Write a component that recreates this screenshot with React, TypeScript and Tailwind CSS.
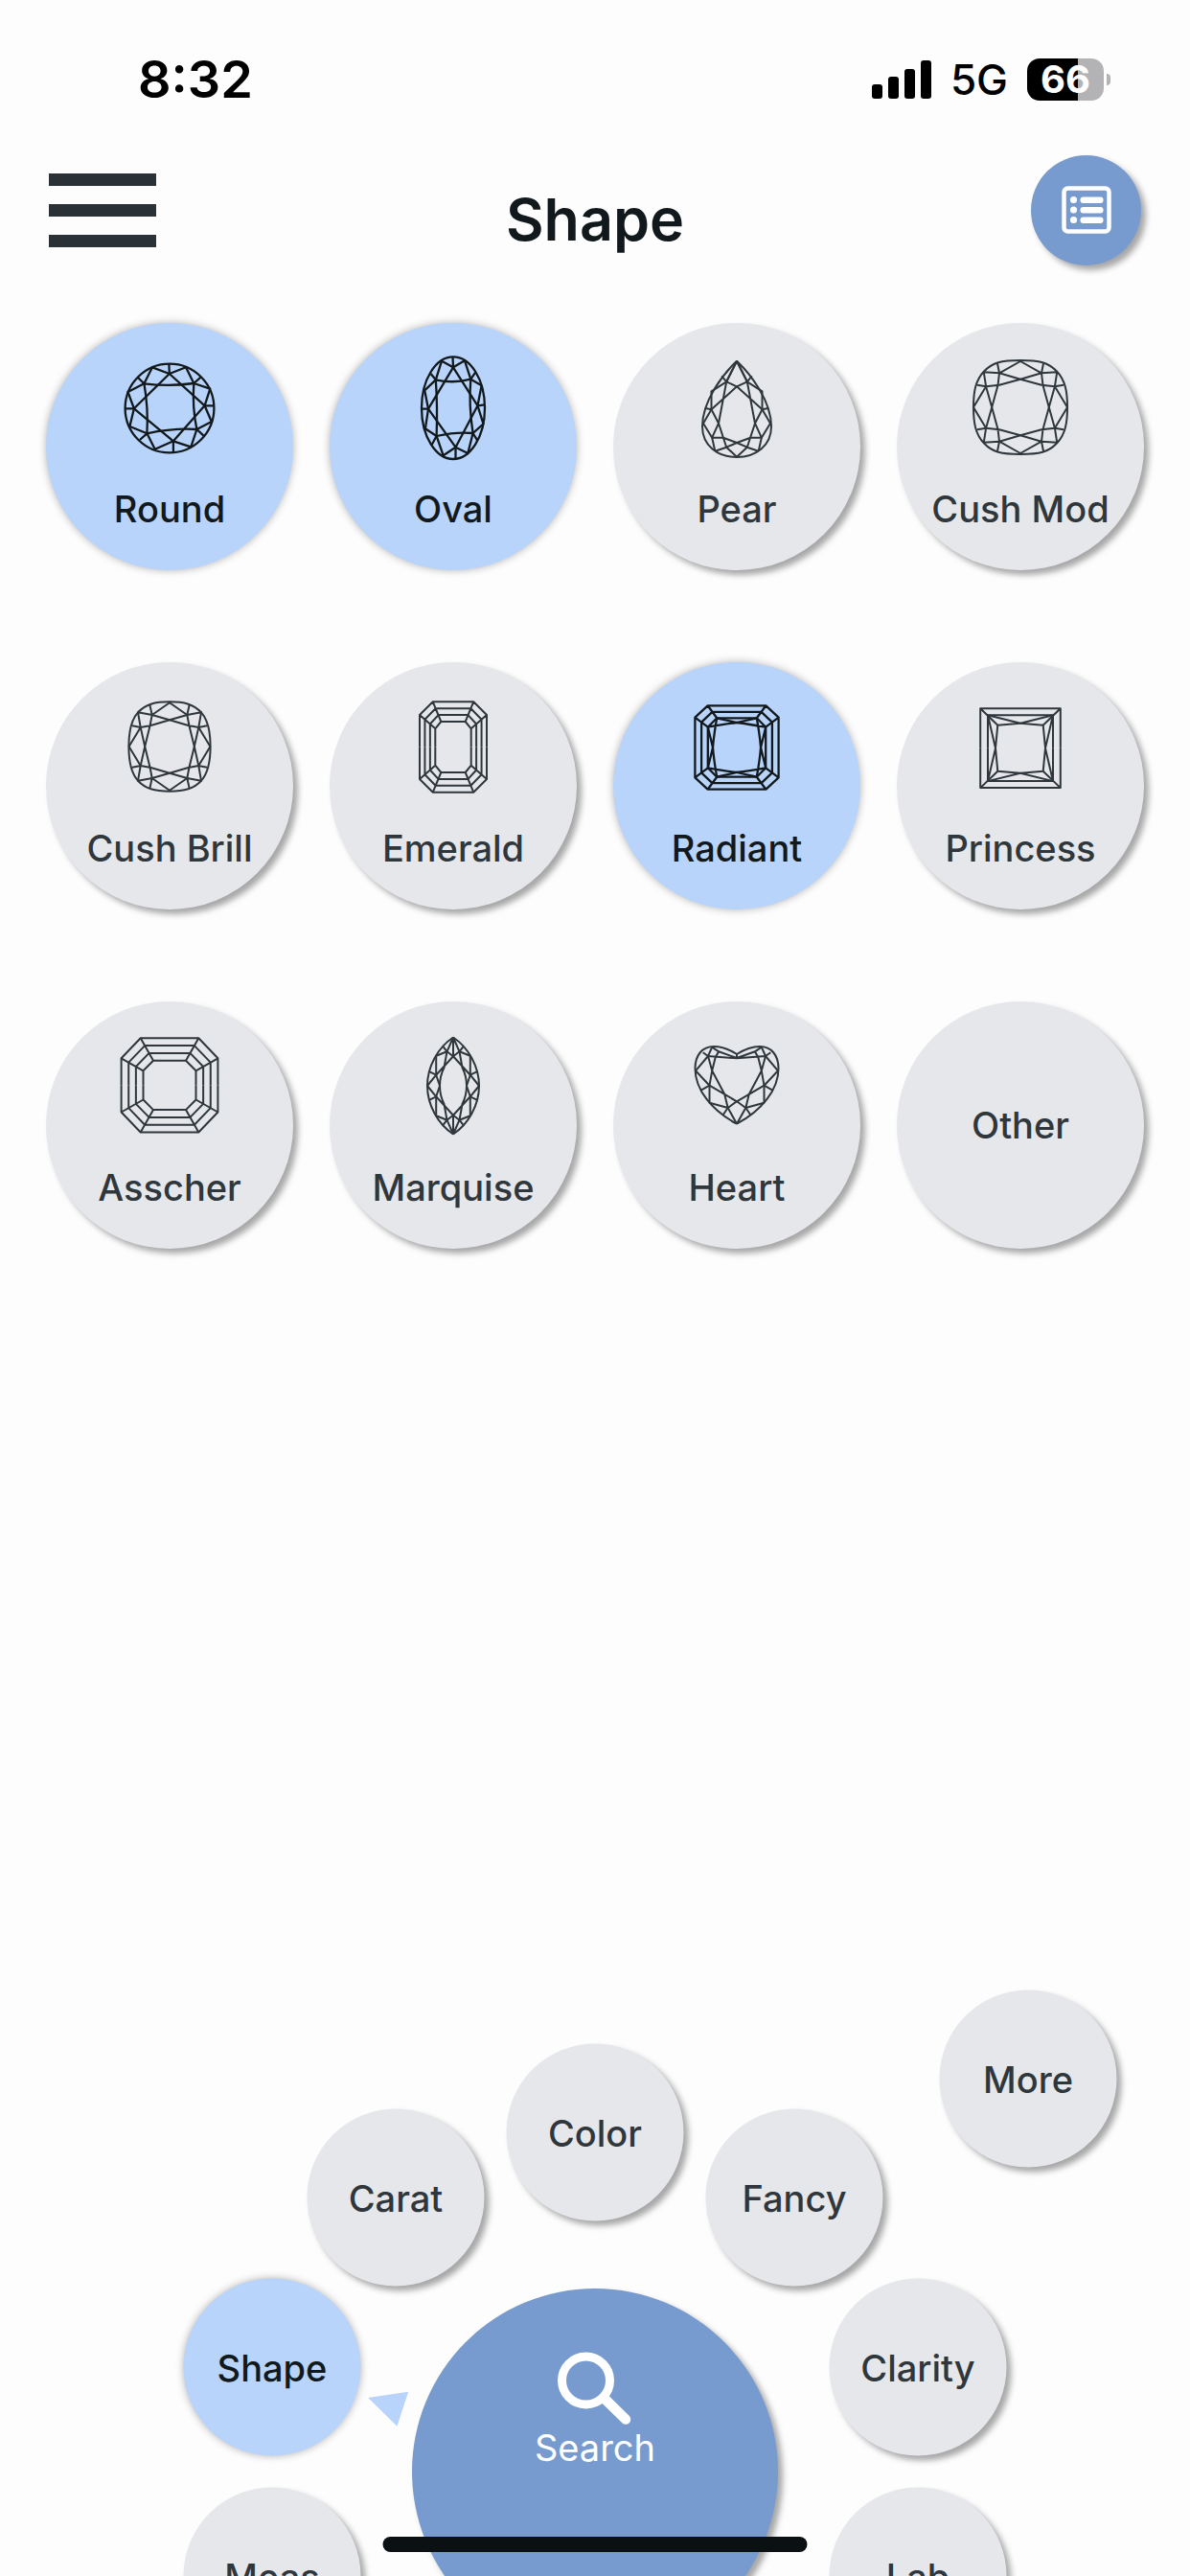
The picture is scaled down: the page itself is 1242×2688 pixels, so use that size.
import { useState, type ReactNode } from 'react';
import clsx from 'clsx';

type Point = [number, number];

// Draws its children four times, flipped around the centre of the 120x120 box
function Quarters({ cy = 60, children }: { cy?: number; children: ReactNode }) {
  return (
    <>
      <g>{children}</g>
      <g transform="matrix(-1 0 0 1 120 0)">{children}</g>
      <g transform={`matrix(1 0 0 -1 0 ${cy * 2})`}>{children}</g>
      <g transform={`matrix(-1 0 0 -1 120 ${cy * 2})`}>{children}</g>
    </>
  );
}

function Halves({ children }: { children: ReactNode }) {
  return (
    <>
      <g>{children}</g>
      <g transform="matrix(-1 0 0 1 120 0)">{children}</g>
    </>
  );
}

// Step cut: nested octagons, given by the top left corner of the outer and the inner one
function StepCut({ outer, inner, rings, cy }: { outer: [Point, Point]; inner: [Point, Point]; rings: number; cy: number }) {
  const mix = (a: Point, b: Point, t: number): Point => [a[0] + (b[0] - a[0]) * t, a[1] + (b[1] - a[1]) * t];
  const d = Array.from({ length: rings }, (_, i) => {
    const t = i / (rings - 1);
    const top = mix(outer[0], inner[0], t);
    const side = mix(outer[1], inner[1], t);
    return `M60 ${top[1]}H${top[0]}L${side[0]} ${side[1]}V${cy}`;
  }).join('');
  return (
    <Quarters cy={cy}>
      <path d={`${d}M${outer[0]}L${inner[0]}M${outer[1]}L${inner[1]}`} />
    </Quarters>
  );
}

const SHAPES: { name: string; icon?: ReactNode }[] = [
  {
    name: 'Round',
    icon: (
      <>
        <circle cx="60" cy="61" r="46.4" />
        <path d="M59.8 25L96.6 58.3L63.9 95.3L22.9 61.3Z" />
        <path d="M33.4 35.3Q60 38.5 85.3 35Q83.5 60 88.4 83Q64 81.5 36.4 87.3Q38 61 33.4 35.3Z" />
        <path d="M59.8 25L42 18.3L33.4 35.3L16.5 44L22.9 61.3L18.4 80L36.4 87.3L44.7 103.7L63.9 95.3L82.3 101.3L88.4 83L103.8 75L96.6 58.3L102.3 40.7L85.3 35L77 18.3Z" />
        <path d="M59.8 25L59.4 15M85.3 35L92.5 28.7M96.6 58.3H106.2M88.4 83L95.5 89.7M63.9 95.3V106.7M36.4 87.3L28.9 94M22.9 61.3H13.5M33.4 35.3L27 29" />
      </>
    ),
  },
  {
    name: 'Oval',
    icon: (
      <>
        <ellipse cx="60" cy="60.7" rx="33" ry="53.3" />
        <path d="M60 18.3L85.5 58.3L62.5 101.7L34 61.7Z" />
        <path d="M41.8 31.3Q60 35.5 78.3 30.7Q76 58 80.6 87Q63 85.5 42.6 90Q43.8 60 41.8 31.3Z" />
        <path d="M60 18.3L48 11.7L41.8 31.3L30.2 42.3L34 61.7L30.9 82.3L42.6 90L49.7 110.3L62.5 101.7L75.3 108L80.6 87L91.5 77.3L85.5 58.3L89.6 37.3L78.3 30.7L72 11.3Z" />
        <path d="M60 18.3L59.5 7.3M78.3 30.7L83.2 23.7M85.5 58.3L93 57.3M80.6 87L85.1 94.3M62.5 101.7V114M42.6 90L37.7 99M34 61.7H27M41.8 31.3L36.6 25" />
      </>
    ),
  },
  {
    name: 'Pear',
    icon: (
      <Halves>
        <path d="M60 11.7C46 25 24 53 24 80C24 100 40 112 60 112" />
        <path d="M60 11.7L49.2 33.3L44.2 27.3M49.2 33.3L33.5 43.3V62.3L27.3 61M33.5 62.3L25 76.7L34.2 91.7L37.3 105.7" />
        <path d="M70.8 33.3L60 38.3L33.5 62.3L41 76.7L49.2 101.7L60 111.7M60 11.7L49.2 33.3L41 76.7L34.2 91.7H45.7L60 97M37.3 105.7L49.2 101.7L60 97" />
      </Halves>
    ),
  },
  {
    name: 'Cush Mod',
    icon: (
      <Quarters cy={60}>
        <path d="M60 11C40 11 31 13 22 22.5C13 32 11 44 11 60" />
        <path d="M60 12L38 24.3L21.8 23.3L24.1 38.3L11 60M38 24.3L36 14.3M24.1 38.3L15 36.7" />
        <path d="M38 24.3L60 30.7L38 36.7L24.1 38.3L30.2 60L36.5 37L38 24.3" />
      </Quarters>
    ),
  },
  {
    name: 'Cush Brill',
    icon: (
      <Quarters cy={60}>
        <path d="M60 13.3C44 13.3 35 16 27 24.3C20 32 17.4 44 17.4 60" />
        <path d="M60 14.3L41.7 27L27 24.3L29.7 40L17.6 60M41.7 27L39.4 16.7M29.7 40L21 38.3" />
        <path d="M41.7 27L60 32.3L40.5 38L29.7 40L34.2 60L39.6 38L41.7 27" />
      </Quarters>
    ),
  },
  {
    name: 'Emerald',
    icon: <StepCut outer={[[38.8, 13.3], [25, 27]]} inner={[[47.3, 34], [41.3, 41.3]]} rings={4} cy={60.5} />,
  },
  {
    name: 'Radiant',
    icon: (
      <>
        <StepCut outer={[[29.6, 17.3], [16.4, 29.7]]} inner={[[39.2, 30.3], [29.8, 39.7]]} rings={3} cy={61} />
        <Quarters cy={61}>
          <path d="M39.2 30.3L60 35Q48 36.5 29.8 39.7L35 61Q36 48 39.2 30.3" />
        </Quarters>
      </>
    ),
  },
  {
    name: 'Princess',
    icon: (
      <Quarters cy={61.7}>
        <path d="M60 20.3H18.2V61.7M60 27.3H26V61.7M18.2 20.3L36.3 37.7" />
        <path d="M26 27.3L60 35.7L36.3 37.7L34 61.7L26 27.3" />
      </Quarters>
    ),
  },
  {
    name: 'Asscher',
    icon: <StepCut outer={[[29.7, 10.3], [9.6, 31.3]]} inner={[[43, 33.7], [32.5, 44.3]]} rings={4} cy={59.4} />,
  },
  {
    name: 'Marquise',
    icon: (
      <Quarters cy={60}>
        <path d="M60 9.5C44 20 33 40 33 60" />
        <path d="M60 9.5V29.3M60 9.5L53.5 24.3L49.7 19.3M53.5 24.3L42.2 28.7V48.7L35.4 45.3M42.2 48.7L33 60M42.2 48.7L46 60" />
        <path d="M66.5 24.3L60 29.3L42.2 48.7M53.5 24.3L50.5 41Q46 50 46 60" />
      </Quarters>
    ),
  },
  {
    name: 'Heart',
    icon: (
      <Halves>
        <path d="M60 27C52 22 44 19 36 19C24 19 16.5 28 16.5 42C16.5 64 34 86 60 99.7" />
        <path d="M60 27V31L41.1 24.3L34.2 19.7L30 29L60 31.3M30 29L24.7 25.3M30 29L17 44.3L31.5 59.7V77.7L50.7 83L60 99.7" />
        <path d="M41.1 24.3L37.7 30.3L34.2 44.3L31.5 59.7L22.7 64.7M30 29L34.2 44.3L47.2 68.7L50.7 83L45.7 90.3M31.5 59.7L60 76.3L50.7 83" />
      </Halves>
    ),
  },
  { name: 'Other' },
];

// Angle on the dial in degrees, clockwise from the top
const SECTIONS = [
  { name: 'Meas', angle: -108 },
  { name: 'Shape', angle: -72 },
  { name: 'Carat', angle: -36 },
  { name: 'Color', angle: 0 },
  { name: 'Fancy', angle: 36 },
  { name: 'Clarity', angle: 72 },
  { name: 'Lab', angle: 108 },
];

const DIAL_RADIUS = 354;

const RAISED = 'bg-gray-200 text-[#2f373c] shadow-[5px_5px_6px_rgba(0,0,0,0.34)]';
const PRESSED = 'bg-[#b8d4fb] text-[#12191c] shadow-[0_0_8px_rgba(0,0,0,0.3)]';

function StatusBar() {
  return (
    <div className="flex h-[162px] items-start justify-between pt-[50px] pr-[83px] pl-36 text-black">
      <span className="text-[54px] leading-[66px] font-semibold">8:32</span>
      <div className="flex h-[66px] items-center">
        <svg className="h-10 w-[62px]" viewBox="0 0 62 40">
          <rect x="0" y="25" width="11" height="15" rx="3" />
          <rect x="17" y="17" width="11" height="23" rx="3" />
          <rect x="34" y="9" width="11" height="31" rx="3" />
          <rect x="51" y="0" width="11" height="40" rx="3" />
        </svg>
        <span className="ml-5 text-[44px] leading-[66px] font-medium">5G</span>
        <div className="ml-5 flex items-center gap-[3px]">
          <div className="flex h-11 w-20 items-center justify-center rounded-[13px] bg-linear-to-r from-black from-66% to-[#b3b3b5] to-66% text-[40px] leading-none font-bold text-white">
            66
          </div>
          <div className="h-3 w-1 rounded-r-full bg-[#b3b3b5]" />
        </div>
      </div>
    </div>
  );
}

function Header({ title }: { title: string }) {
  return (
    <header className="grid grid-cols-[1fr_auto_1fr] items-center px-[51px]">
      <button aria-label="Menu" className="flex w-28 flex-col gap-[19px]">
        <span className="h-[13px] w-full bg-[#2b3237]" />
        <span className="h-[13px] w-full bg-[#2b3237]" />
        <span className="h-[13px] w-full bg-[#2b3237]" />
      </button>
      <h1 className="pt-[18px] text-[61px] leading-[76px] font-semibold text-[#12191d]">{title}</h1>
      <button
        aria-label="Results list"
        className="flex size-[115px] items-center justify-center justify-self-end rounded-full bg-[#789bcf] text-white shadow-[5px_5px_6px_rgba(0,0,0,0.34)]"
      >
        <svg className="size-[52px]" viewBox="0 0 52 52" fill="currentColor">
          <rect x="2.5" y="2.5" width="47" height="45" rx="4" fill="none" stroke="currentColor" strokeWidth="4.5" />
          <circle cx="12.5" cy="14.5" r="3.6" />
          <circle cx="12.5" cy="25" r="3.6" />
          <circle cx="12.5" cy="35.5" r="3.6" />
          <rect x="19.5" y="11.5" width="24" height="6.5" rx="3" />
          <rect x="19.5" y="22" width="24" height="6.5" rx="3" />
          <rect x="19.5" y="32.5" width="24" height="6.5" rx="3" />
        </svg>
      </button>
    </header>
  );
}

export default function App() {
  const [selected, setSelected] = useState<string[]>(['Round', 'Oval', 'Radiant']);
  const [section, setSection] = useState('Shape');

  const toggleShape = (name: string) => {
    setSelected((prev) => (prev.includes(name) ? prev.filter((s) => s !== name) : [...prev, name]));
  };

  const activeAngle = SECTIONS.find((s) => s.name === section)?.angle ?? 0;

  return (
    <div className="relative flex h-screen flex-col overflow-hidden bg-[#fdfdfd] font-[Inter,sans-serif]">
      <StatusBar />
      <Header title={section} />

      {/* Shapes */}
      <main className="mt-[60px] grid flex-1 grid-cols-4 content-start gap-x-[38px] gap-y-24 px-12">
        {SHAPES.map(({ name, icon }) => {
          const active = selected.includes(name);
          return (
            <button
              key={name}
              aria-pressed={active}
              onClick={() => toggleShape(name)}
              className={clsx(
                'flex aspect-square flex-col items-center gap-6 rounded-full text-[38px] leading-[44px] font-medium',
                icon ? 'pt-7' : 'justify-center',
                active ? PRESSED : RAISED
              )}
            >
              {icon && (
                <svg
                  className="size-[120px] shrink-0"
                  viewBox="0 0 120 120"
                  fill="none"
                  stroke="currentColor"
                  strokeWidth={active ? 2.3 : 2}
                  strokeLinejoin="round"
                >
                  {icon}
                </svg>
              )}
              <span className="whitespace-nowrap">{name}</span>
            </button>
          );
        })}
      </main>

      {/* Dial */}
      <nav className="relative h-[612px] shrink-0 text-[38px] leading-[44px] font-medium">
        <div className="absolute top-[503px] left-1/2 size-0">
          {SECTIONS.map(({ name, angle }) => {
            const rad = (angle * Math.PI) / 180;
            return (
              <button
                key={name}
                onClick={() => setSection(name)}
                className={clsx(
                  'absolute flex size-[185px] -translate-1/2 items-center justify-center rounded-full',
                  section === name ? PRESSED : RAISED
                )}
                style={{
                  left: Math.round(DIAL_RADIUS * Math.sin(rad)),
                  top: Math.round(-DIAL_RADIUS * Math.cos(rad)),
                }}
              >
                {name}
              </button>
            );
          })}
          <button
            className={clsx(
              'absolute -top-[410px] left-[452px] flex size-[185px] -translate-1/2 items-center justify-center rounded-full',
              RAISED
            )}
          >
            More
          </button>

          {/* Pointer to the open section */}
          <svg
            className="absolute size-[520px] -translate-1/2"
            viewBox="-260 -260 520 520"
            style={{ rotate: `${activeAngle}deg` }}
          >
            <path d="M0 -249L19 -211H-19Z" fill="#b8d4fb" />
          </svg>

          <button className="absolute flex size-[382px] -translate-1/2 flex-col items-center rounded-full bg-[#789bcf] pt-[64px] font-normal text-white shadow-[5px_5px_6px_rgba(0,0,0,0.34)]">
            <svg className="size-20" viewBox="0 0 80 80" fill="none" stroke="currentColor" strokeLinecap="round">
              <circle cx="30.5" cy="32" r="25" strokeWidth="9" />
              <path d="M49 50L72 72.5" strokeWidth="10.5" />
            </svg>
            Search
          </button>
        </div>
      </nav>

      {/* Home indicator */}
      <div className="absolute bottom-[25px] left-1/2 h-4 w-[443px] -translate-x-1/2 rounded-full bg-[#0b1012]" />
    </div>
  );
}
